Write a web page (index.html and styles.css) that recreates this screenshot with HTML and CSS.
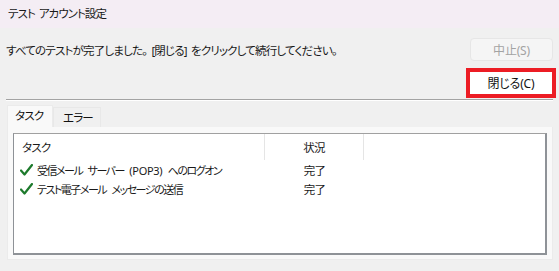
FILE: index.html
```html
<!DOCTYPE html>
<html lang="ja">
<head>
<meta charset="utf-8">
<title>テスト アカウント設定</title>
<link rel="stylesheet" href="styles.css">
</head>
<body>
<div class="window">
  <div class="titlebar">テスト アカウント設定</div>
  <div class="content">
    <div class="top-row">
      <div class="message">すべてのテストが完了しました。 [閉じる] をクリックして続行してください。</div>
      <button class="btn btn-disabled" disabled>中止(S)</button>
    </div>
    <div class="close-row">
      <button class="btn btn-close">閉じる(C)</button>
    </div>
    <div class="separator"></div>
    <div class="tabs">
      <div class="tab tab-active">タスク</div>
      <div class="tab">エラー</div>
    </div>
    <div class="panel">
      <div class="listbox">
        <div class="list-header">
          <div class="col col-task">タスク</div>
          <div class="col col-status">状況</div>
          <div class="col col-rest"></div>
        </div>
        <div class="list-row">
          <div class="col col-task">
            <svg class="check" viewBox="0 0 13 12" width="13" height="12"><path d="M1 6.5 L4.5 10.5 L12 1" fill="none" stroke="#1d7a2c" stroke-width="2.2" stroke-linecap="round" stroke-linejoin="round"/></svg>
            <span class="row-text">受信メール サーバー <span class="latin">(POP3)</span> へのログオン</span>
          </div>
          <div class="col col-status">完了</div>
        </div>
        <div class="list-row">
          <div class="col col-task">
            <svg class="check" viewBox="0 0 13 12" width="13" height="12"><path d="M1 6.5 L4.5 10.5 L12 1" fill="none" stroke="#1d7a2c" stroke-width="2.2" stroke-linecap="round" stroke-linejoin="round"/></svg>
            <span class="row-text">テスト電子メール メッセージの送信</span>
          </div>
          <div class="col col-status">完了</div>
        </div>
      </div>
    </div>
  </div>
</div>
</body>
</html>
```
FILE: styles.css
```css
* { box-sizing: border-box; }
html, body {
  margin: 0;
  padding: 0;
}
body {
  background: #f0f0f0;
  font-family: "Noto Sans", "Noto Sans CJK JP", sans-serif;
  font-size: 11.5px;
  letter-spacing: -0.8px;
  word-spacing: 2px;
  color: #1a1a1a;
  font-feature-settings: "palt";
  width: 559px;
  height: 271px;
  overflow: hidden;
}
.titlebar {
  height: 28px;
  line-height: 28px;
  padding-left: 8px;
  background: #f4edf4;
  letter-spacing: -0.95px;
  word-spacing: 2px;
}
.content {
  padding: 10px 6px 0 6px;
}
.top-row {
  display: flex;
  align-items: center;
  justify-content: space-between;
  height: 23px;
}
.message {
  white-space: nowrap;
}
.btn {
  font-family: inherit;
  font-size: 12px;
  letter-spacing: -0.2px;
  font-feature-settings: "palt";
  padding: 0;
  margin: 0;
}
.btn-disabled {
  width: 83px;
  height: 23px;
  background: #f5f5f5;
  border: 1px solid #e6e6e6;
  border-radius: 4px;
  color: #a3a3a3;
}
.close-row {
  display: flex;
  justify-content: flex-end;
  margin-top: 11px;
  padding-right: 1px;
}
.btn-close {
  width: 82px;
  height: 22px;
  background: #ffffff;
  border: none;
  color: #111;
  outline: 4px solid #ec1c24;
}
.separator {
  margin-top: 5px;
  height: 2px;
  border-top: 1px solid #a3a3a3;
  border-bottom: 1px solid #ffffff;
}
.tabs {
  display: flex;
  align-items: flex-end;
  margin-top: 4px;
  padding-left: 1px;
  height: 22px;
}
.tab {
  height: 20px;
  width: 48px;
  padding-left: 9px;
  line-height: 19px;
  background: #f0f0f0;
  border: 1px solid #e8e8e8;
  border-bottom: none;
  color: #111;
}
.tab-active {
  height: 22px;
  width: 46px;
  padding-left: 7px;
  background: #f9f9f9;
  border-color: #ebebeb;
  line-height: 20px;
}
.panel {
  margin-left: 1px;
  width: 546px;
  height: 133px;
  background: #f9f9f9;
  border: 1px solid #ebebeb;
  border-top: none;
  padding: 6px 5px 5px 5px;
}
.listbox {
  height: 122px;
  background: #ffffff;
  border: 1px solid #8e9297;
  border-top-color: #a0a0a0;
  border-bottom-width: 2px;
  border-right-width: 2px;
}
.list-header {
  display: flex;
  height: 26px;
  align-items: stretch;
}
.list-header .col {
  display: flex;
  align-items: center;
}
.col-task {
  width: 251px;
  padding-left: 8px;
  border-right: 1px solid #e5e5e5;
}
.col-status {
  width: 99px;
  justify-content: center;
  border-right: 1px solid #e5e5e5;
}
.list-row {
  display: flex;
  height: 19px;
  align-items: center;
}
.list-row .col-task {
  border-right: 1px solid transparent;
  padding-left: 6px;
  display: flex;
  align-items: center;
}
.list-row .col-status {
  border-right: none;
  text-align: center;
}
.row-text {
  font-size: 11px;
  letter-spacing: -1.5px;
  word-spacing: 4px;
  white-space: nowrap;
}
.latin {
  letter-spacing: -0.3px;
}
.check {
  flex: none;
  margin-right: 4px;
}
```
